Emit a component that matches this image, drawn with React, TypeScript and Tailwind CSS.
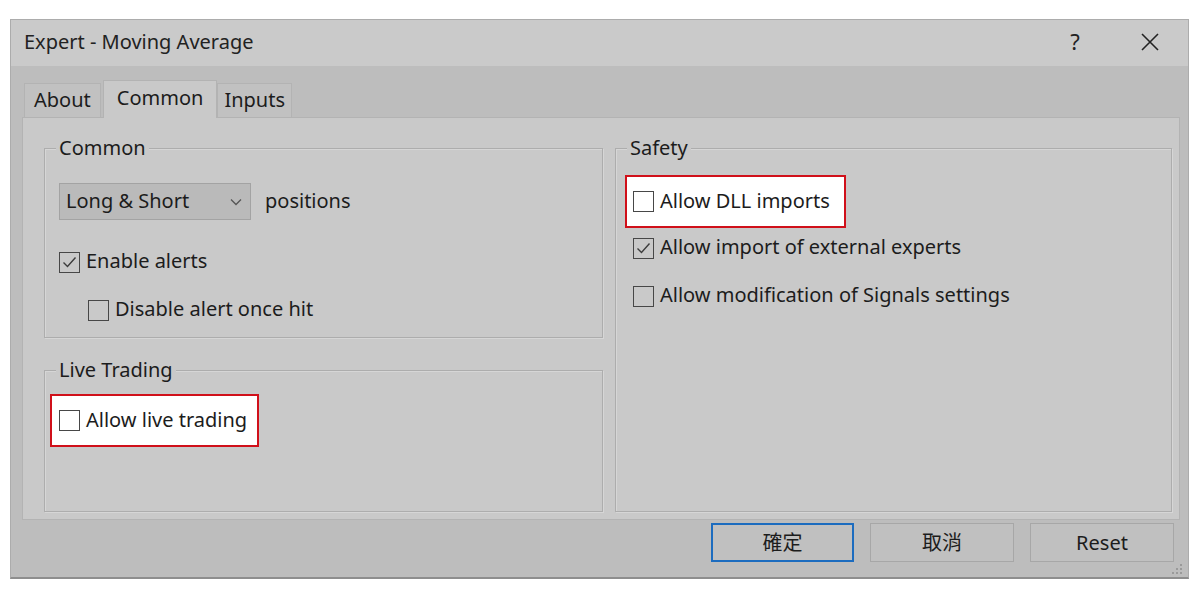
import React, { useState } from 'react';

const FONT = { fontFamily: '"Noto Sans", "Noto Sans CJK TC", sans-serif' };

function CheckBox({ checked }: { checked: boolean }) {
  return (
    <span className="w-[21px] h-[21px] shrink-0 border-[1.5px] border-[#474747] bg-transparent flex items-center justify-center">
      {checked && (
        <svg width="17" height="17" viewBox="0 0 17 17">
          <path d="M2.5 8.5 L6.5 12.5 L14.5 3.5" fill="none" stroke="#3c3c3c" strokeWidth="1.4" />
        </svg>
      )}
    </span>
  );
}

function Check({ label, checked, className = '' }: { label: string; checked?: boolean; className?: string }) {
  const [on, setOn] = useState(!!checked);
  return (
    <label className={`flex items-center gap-[6px] cursor-default ${className}`} onClick={() => setOn(!on)}>
      <CheckBox checked={on} />
      <span className="text-[20px] leading-none text-[#1c1c1c] pb-[2px]">{label}</span>
    </label>
  );
}

function Group({ title, className = '', children }: { title: string; className?: string; children?: React.ReactNode }) {
  return (
    <div className={`relative border border-[#adadad] shadow-[inset_1px_1px_0_#d6d6d6,1px_1px_0_#d6d6d6] ${className}`}>
      <span className="absolute -top-[14px] left-[11px] px-[3px] bg-[#c9c9c9] text-[20px] leading-[26px] text-[#1c1c1c]">
        {title}
      </span>
      {children}
    </div>
  );
}

export default function App() {
  const [tab, setTab] = useState('common');

  return (
    <div className="min-h-screen bg-white pt-[19px] pl-[10px]" style={FONT}>
      <div className="w-[1179px] h-[560px] bg-[#bdbdbd] border border-[#acacac] border-b-2 border-b-[#8e8e8e] flex flex-col">
        {/* title bar */}
        <div className="h-[46px] bg-[#cacaca] flex items-center pl-[13px] pr-[28px] pb-[3px] shrink-0">
          <span className="text-[20px] text-[#222] flex-1">Expert - Moving Average</span>
          <span className="text-[22px] text-[#222] w-[20px] text-center mr-[55px]">?</span>
          <svg width="20" height="20" viewBox="0 0 20 20">
            <path d="M2 2 L18 18 M18 2 L2 18" stroke="#222" strokeWidth="1.6" />
          </svg>
        </div>

        <div className="flex-1 pl-[11px] pr-[8px] pt-[14px] flex flex-col">
          {/* tabs */}
          <div className="flex items-end h-[37px] pl-[2px] relative z-10">
            <button
              onClick={() => setTab('about')}
              className={
                tab === 'about'
                  ? 'h-[38px] -mb-px px-[9px] bg-[#c9c9c9] border border-b-0 border-[#b3b3b3] text-[20px] text-[#1c1c1c] flex items-start pt-[2px]'
                  : 'h-[34px] px-[9px] mr-[2px] bg-[#c1c1c1] border border-b-0 border-[#b3b3b3] text-[20px] text-[#1c1c1c] flex items-center pb-[2px]'
              }
            >
              About
            </button>
            <button
              onClick={() => setTab('common')}
              className={
                tab === 'common'
                  ? 'h-[38px] -mb-px px-[13px] bg-[#c9c9c9] border border-b-0 border-[#b3b3b3] text-[20px] text-[#1c1c1c] flex items-start pt-[2px]'
                  : 'h-[34px] px-[13px] bg-[#c1c1c1] border border-b-0 border-[#b3b3b3] text-[20px] text-[#1c1c1c] flex items-center pb-[2px]'
              }
            >
              Common
            </button>
            <button
              onClick={() => setTab('inputs')}
              className={
                tab === 'inputs'
                  ? 'h-[38px] -mb-px px-[6px] bg-[#c9c9c9] border border-b-0 border-[#b3b3b3] text-[20px] text-[#1c1c1c] flex items-start pt-[2px]'
                  : 'h-[34px] px-[6px] bg-[#c1c1c1] border border-b-0 border-[#b3b3b3] text-[20px] text-[#1c1c1c] flex items-center pb-[2px]'
              }
            >
              Inputs
            </button>
          </div>

          {/* panel */}
          <div className="h-[403px] bg-[#c9c9c9] border border-[#b3b3b3] pl-[21px] pr-[6px] pt-[30px] grid grid-cols-[559px_557px] gap-x-[12px]">
            <div className="flex flex-col gap-[32px]">
              <Group title="Common" className="h-[190px] pl-[14px] pt-[34px]">
                <div className="flex items-center gap-[14px]">
                  <div className="w-[192px] h-[37px] bg-[#bababa] border border-[#a3a3a3] flex items-center pl-[6px] pr-[8px]">
                    <span className="flex-1 text-[20px] text-[#1c1c1c] pb-[2px]">Long &amp; Short</span>
                    <svg width="12" height="8" viewBox="0 0 12 8">
                      <path d="M1 1.5 L6 6.5 L11 1.5" fill="none" stroke="#555" strokeWidth="1.3" />
                    </svg>
                  </div>
                  <span className="text-[20px] text-[#1c1c1c] pb-[2px]">positions</span>
                </div>
                <Check label="Enable alerts" checked className="mt-[31px]" />
                <Check label="Disable alert once hit" className="mt-[26px] ml-[29px]" />
              </Group>
              <Group title="Live Trading" className="h-[142px] pl-[5px] pt-[23px]">
                <div className="inline-flex bg-white border-2 border-[#d0101a] w-[209px] h-[53px] items-center pl-[7px]">
                  <Check label="Allow live trading" />
                </div>
              </Group>
            </div>

            <Group title="Safety" className="h-[364px] pl-[9px] pt-[26px]">
              <div className="flex bg-white border-2 border-[#d0101a] w-[221px] h-[53px] items-center pl-[6px]">
                <Check label="Allow DLL imports" />
              </div>
              <Check label="Allow import of external experts" checked className="mt-[9px] ml-[8px]" />
              <Check label="Allow modification of Signals settings" className="mt-[26px] ml-[8px]" />
            </Group>
          </div>

          {/* buttons */}
          <div className="flex justify-end gap-[16px] pr-[6px] mt-[3px] relative">
            <button className="w-[143px] h-[39px] bg-[#c0c0c0] border-2 border-[#1c6cbf] text-[20px] text-[#1c1c1c]">確定</button>
            <button className="w-[144px] h-[39px] bg-[#c0c0c0] border border-[#a7a7a7] text-[20px] text-[#1c1c1c]">取消</button>
            <button className="w-[144px] h-[39px] bg-[#c0c0c0] border border-[#a7a7a7] text-[20px] text-[#1c1c1c]">Reset</button>
            <svg className="absolute right-[-4px] bottom-[-14px]" width="14" height="14" viewBox="0 0 14 14">
              <g fill="#9a9a9a">
                <rect x="10" y="2" width="2" height="2" />
                <rect x="6" y="6" width="2" height="2" />
                <rect x="10" y="6" width="2" height="2" />
                <rect x="2" y="10" width="2" height="2" />
                <rect x="6" y="10" width="2" height="2" />
                <rect x="10" y="10" width="2" height="2" />
              </g>
            </svg>
          </div>
        </div>
      </div>
    </div>
  );
}
